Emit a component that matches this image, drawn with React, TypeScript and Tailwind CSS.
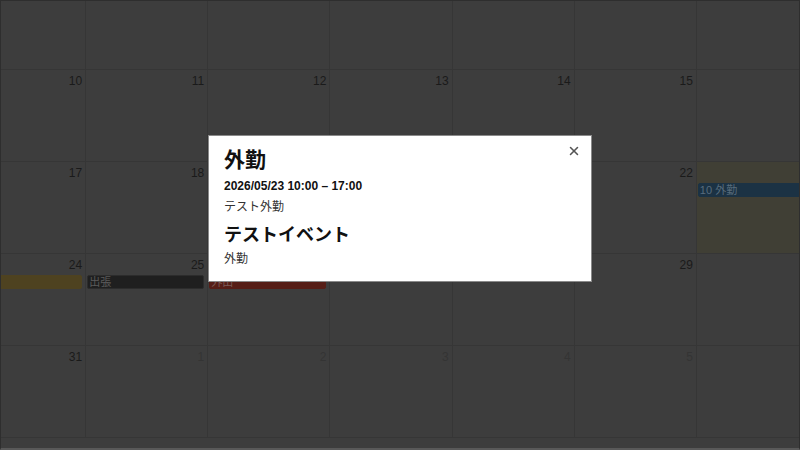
import React from 'react';
import { X } from 'lucide-react';

type CalEvent = { title: string; tone: 'yellow' | 'dark' | 'red' | 'blue' };
type Day = { n: number; other?: boolean; today?: boolean; hidden?: boolean; events?: CalEvent[] };

const weeks: Day[][] = [
  [3, 4, 5, 6, 7, 8, 9].map((n) => ({ n, hidden: true })),
  [{ n: 10 }, { n: 11 }, { n: 12 }, { n: 13 }, { n: 14 }, { n: 15 }, { n: 16, hidden: true }],
  [
    { n: 17 }, { n: 18 }, { n: 19 }, { n: 20 }, { n: 21 }, { n: 22 },
    { n: 23, today: true, hidden: true, events: [{ title: '10 外勤', tone: 'blue' }] },
  ],
  [
    { n: 24, events: [{ title: '', tone: 'yellow' }] },
    { n: 25, events: [{ title: '出張', tone: 'dark' }] },
    { n: 26, events: [{ title: '外出', tone: 'red' }] },
    { n: 27 }, { n: 28 }, { n: 29 }, { n: 30, hidden: true },
  ],
  [
    { n: 31 }, { n: 1, other: true }, { n: 2, other: true }, { n: 3, other: true },
    { n: 4, other: true }, { n: 5, other: true }, { n: 6, other: true, hidden: true },
  ],
];

const toneClass: Record<CalEvent['tone'], string> = {
  yellow: 'bg-[#4e4220] border-[#4e4220] text-[#5e5a4a] -ml-[40px]',
  dark: 'bg-[#1f1f1f] border-[#2c2c2c] text-[#5a5a5a] ml-[1px]',
  red: 'bg-[#561e17] border-[#561e17] text-[#7a5a56] ml-[1px]',
  blue: 'bg-[#1b3244] border-[#1b3244] text-[#586c7c] ml-[1px] -mr-[20px]',
};

// 日付セル（右端・上端で見切れている日付は番号を描かない）
const DayCell: React.FC<{ day: Day }> = ({ day }) => (
  <div className={`border-r border-[#363636] ${day.today ? 'bg-[#403f35]' : ''}`}>
    <div
      className={`h-[18px] text-right pr-[3px] pt-[4px] text-[12px] leading-[14px] ${
        day.other ? 'text-[#343434]' : 'text-[#1a1a1a]'
      }`}
    >
      {day.hidden ? null : day.n}
    </div>
    {day.events?.map((ev, i) => (
      <div
        key={i}
        className={`mt-[3px] mr-[3px] h-[14px] border rounded-[2px] px-[1px] text-[11px] leading-[12px] whitespace-nowrap overflow-hidden ${toneClass[ev.tone]}`}
      >
        {ev.title}
      </div>
    ))}
  </div>
);

export default function App() {
  return (
    <div
      className="relative w-[800px] h-[450px] overflow-hidden bg-[#3d3d3d] border-t border-l border-r border-[#2e2e2e] border-b-2 border-b-[#595959]"
      style={{ fontFamily: '"Liberation Sans", Arial, "Noto Sans CJK JP", sans-serif' }}
    >
      {/* カレンダー本体（横スクロール中） */}
      <div className="w-[855px] -ml-[37px] -mt-[23px]">
        {weeks.map((week, wi) => (
          <div key={wi} className="grid grid-cols-7 h-[92px] border-b border-[#363636]">
            {week.map((day, di) => (
              <DayCell key={di} day={day} />
            ))}
          </div>
        ))}
      </div>

      {/* モーダル */}
      <div className="absolute inset-0 flex justify-center pt-[134px]">
        <div className="relative w-[384px] h-[147px] bg-white border border-[#8a8a8a] px-[15px] pt-[12px] text-[#333]">
          <button className="absolute right-[8px] top-[6px] text-[#555] p-[2px]">
            <X size={14} strokeWidth={2.6} />
          </button>
          <h2 className="text-[21px] leading-[24px] font-bold text-[#111]">外勤</h2>
          <p className="mt-[5px] text-[12px] leading-[18px] font-bold text-[#111]">
            2026/05/23 10:00 – 17:00
          </p>
          <p className="mt-[3px] text-[12px] leading-[18px]">テスト外勤</p>
          <h3 className="mt-[8px] text-[18px] leading-[22px] font-bold text-[#111]">テストイベント</h3>
          <p className="mt-[4px] text-[12px] leading-[18px]">外勤</p>
        </div>
      </div>
    </div>
  );
}
